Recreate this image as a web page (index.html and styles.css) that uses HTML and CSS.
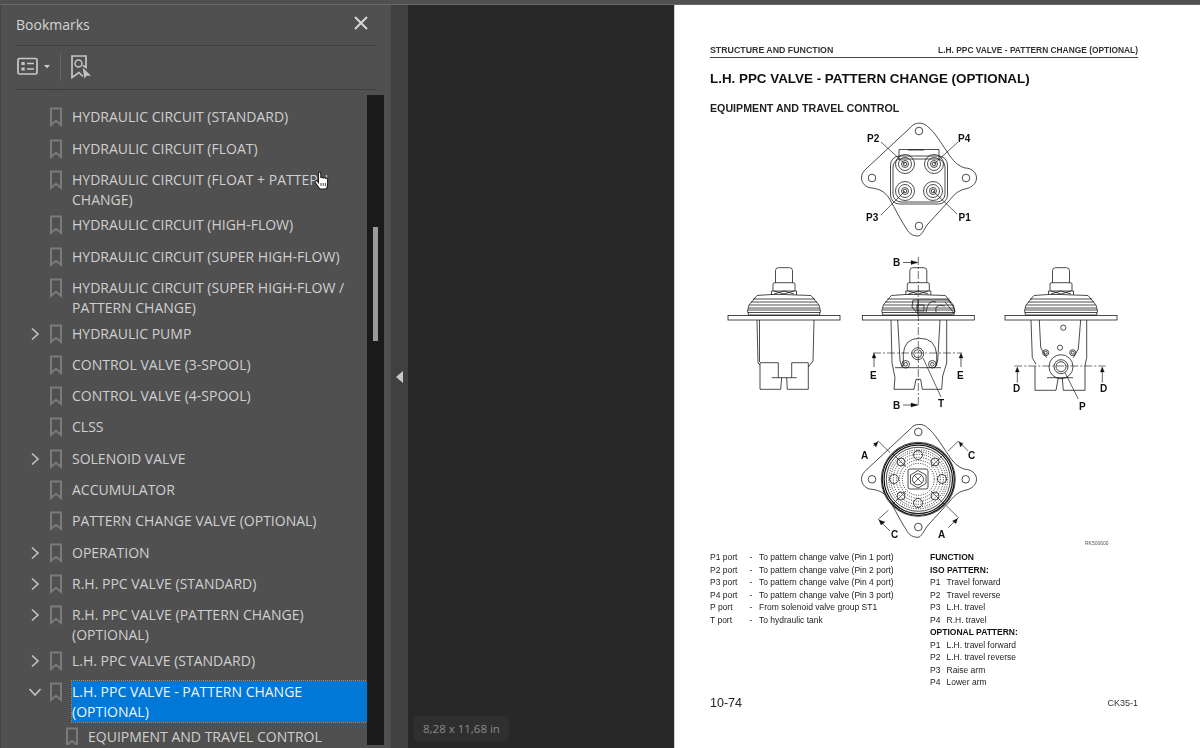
FILE: index.html
```html
<!DOCTYPE html>
<html lang="en">
<head>
<meta charset="utf-8">
<title>Bookmarks</title>
<link rel="stylesheet" href="styles.css">
</head>
<body>
<svg class="defs" width="0" height="0" aria-hidden="true">
  <defs>
    <symbol id="bm" viewBox="0 0 14 20"><path d="M2 1.5H12V18L7 13.8 2 18Z" fill="none" stroke="#7a7a7a" stroke-width="2"/></symbol>
    <symbol id="chev-r" viewBox="0 0 14 14"><path d="M4 1.5 10 7 4 12.5" fill="none" stroke="#c4c4c4" stroke-width="1.6"/></symbol>
    <symbol id="chev-d" viewBox="0 0 14 14"><path d="M1.5 4 7 10 12.5 4" fill="none" stroke="#c4c4c4" stroke-width="1.6"/></symbol>
  </defs>
</svg>
<div class="app">
  <div class="topbar"></div>
  <div class="main">
    <aside class="panel">
      <header class="panel-head">
        <span class="panel-title">Bookmarks</span>
        <svg class="close" width="14" height="14" viewBox="0 0 14 14"><path d="M1 1 13 13M13 1 1 13" stroke="#d6d6d6" stroke-width="2"/></svg>
      </header>
      <div class="toolbar">
        <svg class="tool-list" width="22" height="19" viewBox="0 0 22 19"><rect x="1" y="1.5" width="19" height="15.5" rx="1.5" fill="none" stroke="#c8c8c8" stroke-width="1.7"/><rect x="4.5" y="5" width="3.2" height="3" fill="#c8c8c8"/><rect x="4.5" y="10.5" width="3.2" height="3" fill="#c8c8c8"/><path d="M10 6.5H17M10 12H17" stroke="#c8c8c8" stroke-width="1.7"/></svg>
        <svg class="caret" width="6" height="3.500" viewBox="0 0 7 4"><path d="M0 0H7L3.500 4Z" fill="#c8c8c8"/></svg>
        <span class="tool-sep"></span>
        <svg class="tool-mark" width="21" height="24" viewBox="0 0 21 24"><path d="M12 10.500 15 12.500V1H1V22.500L8 17.500 12 21.500" fill="none" stroke="#c4c4c4" stroke-width="1.7"/><circle cx="7.500" cy="8.500" r="3.500" fill="none" stroke="#c4c4c4" stroke-width="1.500"/><path d="M11.700 12.700 20 20.700 15.500 20.700 13.500 23.800Z" fill="#c4c4c4"/></svg>
      </div>
      <div class="list-wrap">
        <ul class="list">
          <li class="row row-clipped"><span class="chev"></span><svg class="bm"><use href="#bm"/></svg><span class="label"></span></li>
          <li class="row"><span class="chev"></span><svg class="bm"><use href="#bm"/></svg><span class="label">HYDRAULIC CIRCUIT (STANDARD)</span></li>
          <li class="row"><span class="chev"></span><svg class="bm"><use href="#bm"/></svg><span class="label">HYDRAULIC CIRCUIT (FLOAT)</span></li>
          <li class="row two"><span class="chev"></span><svg class="bm"><use href="#bm"/></svg><span class="label">HYDRAULIC CIRCUIT (FLOAT + PATTERN CHANGE)</span></li>
          <li class="row"><span class="chev"></span><svg class="bm"><use href="#bm"/></svg><span class="label">HYDRAULIC CIRCUIT (HIGH-FLOW)</span></li>
          <li class="row"><span class="chev"></span><svg class="bm"><use href="#bm"/></svg><span class="label">HYDRAULIC CIRCUIT (SUPER HIGH-FLOW)</span></li>
          <li class="row two"><span class="chev"></span><svg class="bm"><use href="#bm"/></svg><span class="label">HYDRAULIC CIRCUIT (SUPER HIGH-FLOW / PATTERN CHANGE)</span></li>
          <li class="row"><svg class="chev"><use href="#chev-r"/></svg><svg class="bm"><use href="#bm"/></svg><span class="label">HYDRAULIC PUMP</span></li>
          <li class="row"><span class="chev"></span><svg class="bm"><use href="#bm"/></svg><span class="label">CONTROL VALVE (3-SPOOL)</span></li>
          <li class="row"><span class="chev"></span><svg class="bm"><use href="#bm"/></svg><span class="label">CONTROL VALVE (4-SPOOL)</span></li>
          <li class="row"><span class="chev"></span><svg class="bm"><use href="#bm"/></svg><span class="label">CLSS</span></li>
          <li class="row"><svg class="chev"><use href="#chev-r"/></svg><svg class="bm"><use href="#bm"/></svg><span class="label">SOLENOID VALVE</span></li>
          <li class="row"><span class="chev"></span><svg class="bm"><use href="#bm"/></svg><span class="label">ACCUMULATOR</span></li>
          <li class="row"><span class="chev"></span><svg class="bm"><use href="#bm"/></svg><span class="label">PATTERN CHANGE VALVE (OPTIONAL)</span></li>
          <li class="row"><svg class="chev"><use href="#chev-r"/></svg><svg class="bm"><use href="#bm"/></svg><span class="label">OPERATION</span></li>
          <li class="row"><svg class="chev"><use href="#chev-r"/></svg><svg class="bm"><use href="#bm"/></svg><span class="label">R.H. PPC VALVE (STANDARD)</span></li>
          <li class="row two"><svg class="chev"><use href="#chev-r"/></svg><svg class="bm"><use href="#bm"/></svg><span class="label">R.H. PPC VALVE (PATTERN CHANGE) (OPTIONAL)</span></li>
          <li class="row"><svg class="chev"><use href="#chev-r"/></svg><svg class="bm"><use href="#bm"/></svg><span class="label">L.H. PPC VALVE (STANDARD)</span></li>
          <li class="row two"><svg class="chev"><use href="#chev-d"/></svg><svg class="bm"><use href="#bm"/></svg><span class="label selected">L.H. PPC VALVE - PATTERN CHANGE (OPTIONAL)</span></li>
          <li class="row child"><span class="chev"></span><svg class="bm"><use href="#bm"/></svg><span class="label label-last">EQUIPMENT AND TRAVEL CONTROL</span></li>
        </ul>
        <div class="scrollbar"><div class="thumb"></div></div>
      </div>
      <svg class="hand" width="16" height="19" viewBox="0 0 16 19"><path d="M4.500 10V2.200C4.500.6 6.800.6 6.800 2.200V7C7 5.800 9 5.800 9.200 7.400 9.400 6.200 11.300 6.200 11.500 7.800 11.800 6.800 13.600 7 13.600 8.600V13C13.600 16 12.400 18 11.500 18H6.500C5.500 18 4.800 16.600 3.500 14.800L1.200 11.600C.3 10.300 1.800 9 3 10L4.500 11.800Z" fill="#fff" stroke="#1c1c1c" stroke-width="1.100"/><path d="M7 12V15M9.200 12V15M11.400 12V15" stroke="#1c1c1c" stroke-width=".8"/></svg>
    </aside>
    <div class="handle"><span class="handle-arrow"></span></div>
    <main class="doc">
      <div class="canvas"><div class="size-tip">8,28 x 11,68 in</div></div>
      <article class="page">
        <div class="running"><span class="run-left">STRUCTURE AND FUNCTION</span><span>L.H. PPC VALVE - PATTERN CHANGE (OPTIONAL)</span></div>
        <h1>L.H. PPC VALVE - PATTERN CHANGE (OPTIONAL)</h1>
        <h2>EQUIPMENT AND TRAVEL CONTROL</h2>
        <svg class="figure" width="428" height="435" viewBox="710 115 428 435">
          <defs>
            <path id="flange" d="M911.500 125.500C914 121.500 923 120.500 927.500 125.500C934 130 941 142 948 152C953 160 958 165 965 167C971 167 976.500 171 976.500 177C976.500 183 971 187 965 188C957 190 954 194 948 201L927 224C924 229 921 235 918 235C911 235 908 231 906 227C900 218 896 209 889 197C885 191 880 188 872 187C866 187 861.500 182 861.500 177C861.500 172 864 170 867 167Z"/>
            <g id="head">
              <path d="M-8.500 281.700V269.500Q-8.500 266.700-5.500 266.700H5.500Q8.500 266.700 8.500 269.500V281.700"/>
              <path d="M-11 290V283Q-11 281.700-9 281.700H9Q11 281.700 11 283V290"/>
              <path d="M-12.500 294V290H12.500V294M-10 290 0 293 10 290M-10 293 0 290 10 293"/>
              <path d="M-27 294.500Q-12 293 0 293.500T27 294.500L35 304 36.500 310 35.500 314H-35.500L-36.500 310-35 304ZM-31 298H31M-33 301H33M-34.500 304H34.500M-35.500 307H35.500M-36 309H36M-36 311.500H36"/>
              <rect x="-56" y="314.500" width="112" height="4.500"/>
            </g>
            <g id="port"><circle r="9.500"/><circle r="6.500"/><circle r="3.500"/><circle r="1.800"/></g>
          </defs>
          <g class="ink">
            <!-- top view -->
            <use href="#flange"/>
            <circle cx="919" cy="130" r="3.800"/><circle cx="872" cy="177" r="3.800"/><circle cx="966" cy="177" r="3.800"/><circle cx="919" cy="225" r="3.800"/>
            <rect x="890.500" y="155" width="57" height="48" rx="9"/>
            <rect x="893" y="158" width="52" height="43" rx="8"/>
            <path d="M899 158V148.500H939V158M908 149H924"/>
            <use href="#port" x="905" y="163"/><use href="#port" x="934" y="163"/><use href="#port" x="905" y="190"/><use href="#port" x="933" y="190"/>
            <path class="thin" d="M881 141 905 163M958 141 934 163M881 214 905 190M957 213 933 190"/>
            <!-- left view -->
            <use href="#head" x="784"/>
            <path d="M757 319 758 362 760 364M814 319 813 360 808.300 366M759.500 319V361"/>
            <path d="M760 362V388.300H780.700L781.700 376.700M786.700 376.700 787.300 388.300H808.300V362"/>
            <path d="M760 361.700H778.300V376.700M791.700 376.700V361.700H808.300M771.700 376.700H796.700"/>
            <!-- centre view -->
            <use href="#head" x="918.300"/>
            <path d="M891 319 892 362 895 376.700 894 388.300H914L916 378.300H920.700L922.300 388.300H941.700L942.700 375 946.700 362V319"/>
            <path d="M897.700 319 900 360 902 366M940 319 937.700 360 935 366M895 366.700H941"/>
            <path d="M903.300 365V353.300Q904 337.300 919.700 337.300T936.700 353.300V365"/>
            <circle cx="917.700" cy="352.700" r="6"/><circle cx="917.700" cy="352.700" r="4"/>
            <circle cx="905.700" cy="363.300" r="3.800"/><circle cx="905.700" cy="363.300" r="1.800"/><circle cx="932.300" cy="363.300" r="3.800"/><circle cx="932.300" cy="363.300" r="1.800"/>
            <path d="M913 299H948L953 305 955 311 952 313H918L912 306ZM918 299V312M926 311Q928 298 936 301M936 311Q934 302 945 305M945 301 954 312"/>
            <rect x="917" y="304" width="7" height="6"/>
            <path class="dash" d="M918.300 256V405M873 352H962"/>
            <path class="thin" d="M923 357 941 396"/>
            <path class="arrow" d="M874 355V366M961 355V366"/>
            <path class="solid" d="M874 352 872 357H876ZM961 352 959 357H963ZM918 261.500 911 259.500V263.500ZM918 404 911 402V406Z"/>
            <path class="thin" d="M903 261.500H917M903 404H917"/>
            <!-- right view -->
            <use href="#head" x="1061"/>
            <path d="M1031 319 1032.300 356.700 1036 363.300M1086.700 319V356.700L1085 365"/>
            <path d="M1035 365V389.300H1056L1058.300 376.700M1062.300 376.700 1063.300 389.300H1085V365"/>
            <path d="M1039.300 319 1040.700 346.700 1046.700 356.700M1080.700 319 1078.300 348 1073.300 356.700"/>
            <path d="M1047 376.700H1073"/>
            <circle cx="1063.300" cy="326.700" r="2.600"/><circle cx="1060" cy="346.700" r="2.600"/>
            <circle cx="1045.700" cy="351.700" r="3"/><circle cx="1045.700" cy="351.700" r="1.500"/><circle cx="1072.700" cy="351.700" r="3"/><circle cx="1072.700" cy="351.700" r="1.500"/>
            <circle cx="1061" cy="365.700" r="12"/><circle cx="1061" cy="365.700" r="7"/><circle cx="1061" cy="365.700" r="5"/>
            <path class="dash" d="M1014.300 365H1105.700"/>
            <path class="thin" d="M1017.300 368V381.700M1102.300 368V381.700M1065 371.700 1078.300 398"/>
            <path class="solid" d="M1017.300 366 1015.300 371H1019.300ZM1102.300 366 1100.300 371H1104.300Z"/>
            <!-- bottom view -->
            <use href="#flange" y="301.300"/>
            <circle cx="918.300" cy="431" r="3.800"/><circle cx="872" cy="478.300" r="3.800"/><circle cx="965.700" cy="478.300" r="3.800"/><circle cx="918.300" cy="526" r="3.800"/>
            <circle class="fillw" cx="918.300" cy="478.300" r="37"/>
            <circle class="heavy" cx="918.300" cy="478.300" r="36"/><circle class="heavy" cx="918.300" cy="478.300" r="34.200"/><circle cx="918.300" cy="478.300" r="32"/>
            <circle class="dots" cx="918.300" cy="478.300" r="29.500"/><circle class="dots" cx="918.300" cy="478.300" r="27.500"/><circle class="dots" cx="918.300" cy="478.300" r="25"/><circle class="dots" cx="918.300" cy="478.300" r="22"/><circle class="dots" cx="918.300" cy="478.300" r="19"/><circle class="dots" cx="918.300" cy="478.300" r="16"/>
            <path class="thin" d="M893 453 906 466M944 453 931 466M893 503 906 490M944 503 931 490"/>
            <circle cx="894" cy="478" r="4.500"/><circle cx="942" cy="478" r="4.500"/><circle cx="918" cy="454" r="4.500"/><circle cx="918" cy="502" r="4.500"/>
            <circle cx="901" cy="461" r="4"/><circle cx="935" cy="461" r="4"/><circle cx="901" cy="495" r="4"/><circle cx="935" cy="495" r="4"/>
            <rect class="fillw" x="908" y="468" width="20" height="20" rx="2"/>
            <path d="M918 469.500 926 474V482.500L918 487 910.500 482.500V474Z"/>
            <circle cx="918" cy="478.300" r="5.500"/>
            <path class="thin" d="M914 474 922 482M922 474 914 482"/>
            <path class="thin" d="M890 451.700 878.300 440 873.300 445M948.300 450 958.300 440 968.300 450M888.300 509.300 878.300 518.300 890 530M946.700 505 958.300 516.700 948.300 526.700"/>
            <path class="solid" d="M878 441 873.500 442.500 876 446ZM959 441 963 442.500 960.500 446ZM879 519 881 524 885 521ZM957.500 517.500 956 522.500 952.500 520Z"/>
          </g>
          <g class="callouts">
            <text x="867" y="141">P2</text><text x="958" y="141">P4</text><text x="866" y="220">P3</text><text x="958.500" y="220">P1</text>
            <text x="893" y="265">B</text><text x="893" y="408">B</text><text x="870" y="378">E</text><text x="957" y="378">E</text><text x="938" y="406">T</text>
            <text x="1013" y="391">D</text><text x="1100" y="391">D</text><text x="1079" y="408.500">P</text>
            <text x="861" y="458">A</text><text x="968" y="458">C</text><text x="891" y="537">C</text><text x="938" y="537">A</text>
            <text class="code" x="1085" y="544">RK500600</text>
          </g>
        </svg>
        <div class="legend">
          <div class="ports">
            <span>P1 port</span><span>-</span><span>To pattern change valve (Pin 1 port)</span>
            <span>P2 port</span><span>-</span><span>To pattern change valve (Pin 2 port)</span>
            <span>P3 port</span><span>-</span><span>To pattern change valve (Pin 4 port)</span>
            <span>P4 port</span><span>-</span><span>To pattern change valve (Pin 3 port)</span>
            <span>P port</span><span>-</span><span>From solenoid valve group ST1</span>
            <span>T port</span><span>-</span><span>To hydraulic tank</span>
          </div>
          <div class="functions">
            <b>FUNCTION</b>
            <b>ISO PATTERN:</b>
            <span>P1</span><span>Travel forward</span>
            <span>P2</span><span>Travel reverse</span>
            <span>P3</span><span>L.H. travel</span>
            <span>P4</span><span>R.H. travel</span>
            <b>OPTIONAL PATTERN:</b>
            <span>P1</span><span>L.H. travel forward</span>
            <span>P2</span><span>L.H. travel reverse</span>
            <span>P3</span><span>Raise arm</span>
            <span>P4</span><span>Lower arm</span>
          </div>
        </div>
        <footer class="page-foot"><span class="pg">10-74</span><span class="model">CK35-1</span></footer>
      </article>
    </main>
  </div>
</div>
</body>
</html>
```
FILE: styles.css
```css
* { box-sizing: border-box; }
html, body { margin: 0; height: 100%; overflow: hidden; }
body { font-family: "Open Sans", "Liberation Sans", sans-serif; background: #282828; }
.defs { position: absolute; }
.app { display: flex; flex-direction: column; width: 1200px; height: 748px; }
.topbar { height: 5px; background: #505050; border-bottom: 1px solid #686868; flex: none; }
.main { display: flex; flex: 1; min-height: 0; }

.panel { position: relative; width: 390px; flex: none; background: #505050; display: flex; flex-direction: column; border-left: 1px solid #444; }
.panel-head { height: 41px; margin: 0 13px 0 14px; padding: 0 1px 2px; display: flex; align-items: center; justify-content: space-between; border-bottom: 1px solid #3e3e3e; flex: none; }
.panel-title { font-size: 14px; color: #d4d4d4; }
.close { margin-right: 8px; margin-top: -2px; }
.toolbar { height: 44px; margin: 0 13px 0 14px; padding-bottom: 2px; display: flex; align-items: center; border-bottom: 1px solid #3e3e3e; flex: none; }
.tool-list { margin-left: 2px; }
.caret { margin-left: 5px; }
.tool-sep { width: 1px; height: 28px; background: #666; margin: 0 10px; }

.list-wrap { margin-top: 5px; height: 650px; display: flex; width: 383px; flex: none; }
.list { list-style: none; margin: 0; padding: 0; width: 366px; overflow: hidden; flex: none; }
.row { display: flex; align-items: flex-start; height: 31.3px; padding-left: 27px; }
.row.two { height: 45.500px; }
.row-clipped { margin-top: -19.2px; height: 31.5px; }
.row.child { padding-left: 43px; }
.chev { width: 14px; height: 14px; margin-top: 3px; flex: none; }
.bm { width: 14px; height: 20px; margin: 0 9px 0 7px; flex: none; }
.label { font-size: 14px; line-height: 20px; color: #cfcfcf; width: 295px; padding-right: 14px; flex: none; }
.label-last { line-height: 16px; margin-top: 2px; }
.selected { background: #0078d7; color: #f2f2f2; outline: 1px dotted #8d8d8d; padding: 1px 14px 0 0; height: 41px; margin-top: -1px; }

.scrollbar { width: 17px; background: #1b1b1b; flex: none; padding: 132px 6px 0; }
.thumb { height: 114px; background: #9a9a9a; }

.hand { position: absolute; left: 313px; top: 166px; }

.handle { width: 18px; flex: none; background: #404040; border-left: 1px solid #4a4a4a; display: flex; align-items: center; padding-left: 5px; }
.handle-arrow { width: 0; height: 0; border-style: solid; border-width: 6px 7px 6px 0; border-color: transparent #c8c8c8 transparent transparent; }

.doc { flex: 1; display: flex; min-width: 0; }
.canvas { position: relative; width: 266px; flex: none; background: #282828; }
.size-tip { position: absolute; left: 6px; bottom: 7px; height: 25px; padding: 0 9px; display: flex; align-items: center; background: #2f2f2f; border-radius: 3px; font-size: 11.500px; color: #8a8a8a; }

.page { width: 526px; flex: none; background: #fff; border-left: 1px solid #cfcfcf; padding: 40px 62px 0 35px; font-family: "Liberation Sans", Arial, sans-serif; color: #222; filter: blur(.3px); }
.running { display: flex; justify-content: space-between; font-size: 8.400px; font-weight: 700; line-height: 11px; padding-bottom: 1px; border-bottom: 1.500px solid #444; color: #333; }
.run-left { font-size: 8.800px; }
h1 { margin: 12px 0 0; font-size: 13.400px; line-height: 18px; font-weight: 700; color: #111; }
h2 { margin: 13px 0 0; font-size: 10.660px; line-height: 14px; font-weight: 700; color: #222; }
.figure { display: block; margin-top: 1px; overflow: visible; }
.ink use, .ink circle, .ink path, .ink rect { fill: none; stroke: #111; stroke-width: .75; }
.ink .thin { stroke-width: .65; }
.ink .heavy { stroke-width: 1.200; }
.ink .dash { stroke-dasharray: 8 2 2 2; stroke-width: .6; }
.ink .arrow { stroke-width: .7; }
.ink .solid { fill: #111; stroke-width: .3; }
.ink .fillw { fill: #fff; }
.ink .dots { stroke-dasharray: 1 1.400; stroke-width: .9; }
.callouts text { font-family: "Liberation Sans", Arial, sans-serif; font-size: 10px; font-weight: 700; fill: #111; }
.callouts .code { font-size: 5px; font-weight: 400; fill: #555; }

.legend { display: flex; font-size: 8.500px; line-height: 12.500px; color: #222; }
.ports { display: grid; grid-template-columns: 39.500px 9.500px auto; width: 220px; align-content: start; }
.functions { display: grid; grid-template-columns: 16.500px auto; align-content: start; }
.functions b { grid-column: 1 / -1; color: #111; }
.page-foot { display: flex; justify-content: space-between; align-items: center; margin-top: 7px; }
.pg { font-size: 12.500px; color: #222; }
.model { font-size: 9px; color: #333; }
```
